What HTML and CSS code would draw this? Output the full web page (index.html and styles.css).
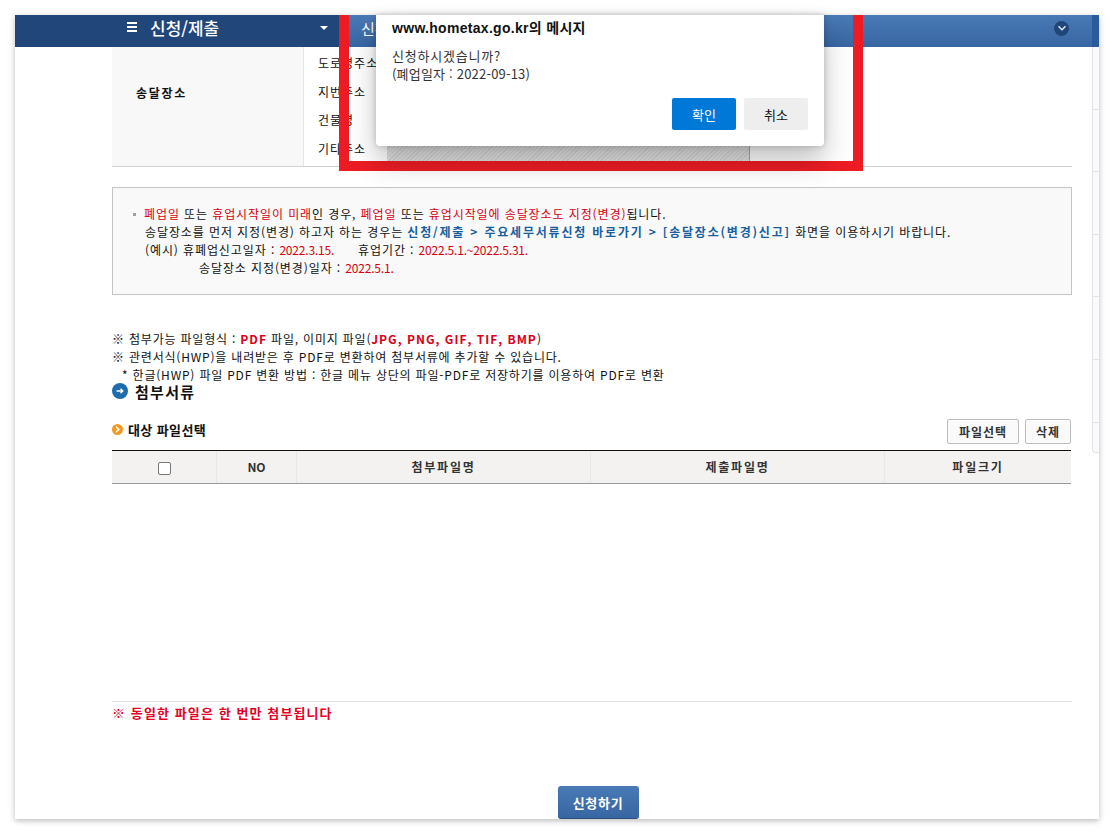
FILE: index.html
```html
<!DOCTYPE html>
<html lang="ko">
  <head>
    <meta charset="utf-8" />
    <title>신청/제출</title>
    <link rel="stylesheet" href="styles.css" />
  </head>
  <body>
    <div class="win">
      <div class="topbar">
        <div class="menuLeft">
          <div class="menuMain">
            <span class="burger"><i></i><i></i><i></i></span>
            <span class="menuTitle">신청/제출</span>
            <span class="caret"></span>
          </div>
        </div>
        <div class="menuRight">
          <span class="menuSub">신청</span>
          <span class="roundBtn">
            <svg width="10" height="10" viewBox="0 0 10 10"><path d="M1.5 3.2 5 6.8 8.5 3.2" fill="none" stroke="#dfe7f2" stroke-width="1.4" /></svg>
          </span>
        </div>
        <div class="menuEnd"></div>
      </div>

      <div class="side">
        <div class="sideCell"></div>
        <div class="sideCell"></div>
        <div class="sideCell"></div>
        <div class="sideCell"></div>
        <div class="sideCell"></div>
        <div class="sideCell"></div>
        <div class="sideCell sideLast"></div>
      </div>

      <div class="content">
        <div class="addrTable">
          <div class="addrHead">송달장소</div>
          <div class="addrLabels">
            <div>도로명주소</div>
            <div>지번주소</div>
            <div>건물명</div>
            <div>기타주소</div>
          </div>
          <div class="addrInputs">
            <div class="hatch"></div>
          </div>
        </div>

        <div class="notice">
          <p class="first"><span class="bullet"></span><em>폐업일</em> 또는 <em>휴업시작일이 미래</em>인 경우, <em>폐업일</em> 또는 <em>휴업시작일에 송달장소도 지정(변경)</em>됩니다.</p>
          <p>송달장소를 먼저 지정(변경) 하고자 하는 경우는 <b class="link">신청/제출 &gt; 주요세무서류신청 바로가기 &gt; [송달장소(변경)신고]</b> 화면을 이용하시기 바랍니다.</p>
          <p>(예시) 휴폐업신고일자 : <em class="date">2022.3.15.</em><span class="gap"></span>휴업기간 : <em class="date">2022.5.1.~2022.5.31.</em></p>
          <p class="indent">송달장소 지정(변경)일자 : <em class="date">2022.5.1.</em></p>
        </div>

        <div class="guide">
          <p>※ 첨부가능 파일형식 : <b class="red">PDF</b> 파일, 이미지 파일(<b class="red">JPG, PNG, GIF, TIF, BMP</b>)</p>
          <p>※ 관련서식(HWP)을 내려받은 후 PDF로 변환하여 첨부서류에 추가할 수 있습니다.</p>
          <p class="sub">* 한글(HWP) 파일 PDF 변환 방법 : 한글 메뉴 상단의 파일-PDF로 저장하기를 이용하여 PDF로 변환</p>
        </div>

        <h2 class="secTitle">
          <svg width="16" height="16" viewBox="0 0 16 16"><circle cx="8" cy="8" r="8" fill="#1f6cab" /><path d="M4.5 8h6M8.5 5.8 10.8 8 8.5 10.2" fill="none" stroke="#fff" stroke-width="1.4" /></svg>
          첨부서류
        </h2>

        <div class="fileBar">
          <h3 class="subTitle">
            <svg width="11" height="11" viewBox="0 0 11 11"><circle cx="5.5" cy="5.5" r="5.5" fill="#f29a1f" /><path d="M4 2.8 6.8 5.5 4 8.2" fill="none" stroke="#fff" stroke-width="1.5" /></svg>
            대상 파일선택
          </h3>
          <div class="fileBtns">
            <button class="btn btnFile">파일선택</button>
            <button class="btn btnDel">삭제</button>
          </div>
        </div>

        <div class="fileTable">
          <div class="fileHead">
            <div class="colCheck"><span class="checkbox"></span></div>
            <div class="colNo">NO</div>
            <div class="colName">첨부파일명</div>
            <div class="colName">제출파일명</div>
            <div class="colName">파일크기</div>
          </div>
          <div class="fileBody"></div>
        </div>

        <div class="onceNote">※ 동일한 파일은 한 번만 첨부됩니다</div>

        <div class="submitRow">
          <button class="submit">신청하기</button>
        </div>
      </div>
    </div>

    <div class="redBox"></div>

    <div class="dialog">
      <div class="dlgTitle">www.hometax.go.kr의 메시지</div>
      <div class="dlgText"><span class="dlgAsk">신청하시겠습니까?</span><br />(폐업일자 : 2022-09-13)</div>
      <div class="dlgBtns">
        <button class="dlgOk">확인</button>
        <button class="dlgCancel">취소</button>
      </div>
    </div>
  </body>
</html>
```

FILE: styles.css
```css
html,
body {
  margin: 0;
  height: 100%;
  background: #fff;
  overflow: hidden;
}

body {
  font-family: "Noto Sans CJK KR", "Liberation Sans", sans-serif;
  font-size: 12px;
  color: #111;
}

p {
  margin: 0;
}

button {
  font-family: inherit;
  cursor: pointer;
}

.win {
  position: relative;
  margin: 15px;
  height: 804px;
  background: #fff;
  box-shadow: 0 2px 5px rgba(0, 0, 0, 0.22), 0 0 12px rgba(0, 0, 0, 0.06);
}

.topbar {
  display: flex;
  height: 32px;
  background: #21477a;
}

.menuLeft {
  width: 324px;
  padding-left: 97px;
  box-sizing: border-box;
  background: #21477a;
}

.menuMain {
  display: flex;
  align-items: center;
  height: 100%;
  padding: 0 0 8px 15px;
  box-sizing: border-box;
  color: #fff;
}

.burger {
  display: flex;
  flex-direction: column;
  gap: 2px;
  width: 10px;
}
.burger i {
  height: 2px;
  background: #fff;
}

.menuTitle {
  margin-left: 13px;
  font-size: 17px;
  font-weight: 500;
}

.caret {
  margin: 2px 0 0 101px;
  border-left: 4px solid transparent;
  border-right: 4px solid transparent;
  border-top: 4px solid #fff;
}

.menuRight {
  flex: 1;
  display: flex;
  align-items: center;
  justify-content: space-between;
  padding: 0 23px 6px 22px;
  box-sizing: border-box;
  color: #fff;
  font-size: 15px;
  background: linear-gradient(#4a7ab5, #3766a3);
}

.roundBtn {
  display: flex;
  align-items: center;
  justify-content: center;
  width: 15px;
  height: 15px;
  border-radius: 50%;
  background: #21477a;
}

.menuEnd {
  width: 7px;
  background: #2a5c9c;
}

.side {
  position: absolute;
  top: 32px;
  right: 0;
  width: 7px;
}
.sideCell {
  height: 62.6px;
  box-sizing: border-box;
  border-left: 1px solid #e2e2e6;
  border-bottom: 1px solid #e2e2e6;
  background: #fafafd;
}
.sideLast {
  height: 30px;
  border-bottom-left-radius: 4px;
}

.content {
  padding: 0 27px 0 97px;
}

.addrTable {
  display: flex;
  height: 120px;
  border-bottom: 1px solid #d0d0d0;
  box-sizing: border-box;
}

.addrHead {
  display: flex;
  align-items: center;
  width: 192px;
  padding: 0 0 28px 24px;
  box-sizing: border-box;
  font-weight: 700;
  letter-spacing: 1.7px;
  background: #f8f8f8;
  border-right: 1px solid #e6e6e6;
}

.addrLabels {
  width: 83px;
  padding: 2px 0 0 14px;
  box-sizing: border-box;
  letter-spacing: 1px;
}
.addrLabels div {
  height: 28.7px;
  line-height: 28.7px;
}

.addrInputs {
  position: relative;
  width: 362px;
  border-right: 1px solid #a8a8a8;
}

.hatch {
  position: absolute;
  left: 0;
  right: 0;
  bottom: 0;
  height: 22px;
  background: repeating-linear-gradient(-45deg, #d6d6d6 0 1px, #e4e4e4 1px 3px);
}

.notice {
  height: 108px;
  margin-top: 20px;
  padding: 17px 0 0 32px;
  box-sizing: border-box;
  border: 1px solid #c4c4c4;
  background: #f9f9f9;
  line-height: 18px;
  letter-spacing: 0.9px;
}
.notice em {
  font-style: normal;
  color: #d6000f;
}
.notice .date {
  letter-spacing: -0.2px;
}
.notice .first {
  margin-left: -2px;
}
.notice .indent {
  margin-left: 54px;
}

.bullet {
  display: inline-block;
  width: 3px;
  height: 3px;
  margin: 0 8px 3px -10px;
  background: #a0a0a0;
}

.gap {
  display: inline-block;
  width: 24px;
}

.link {
  color: #17609f;
  letter-spacing: 1.8px;
}

.guide {
  margin-top: 35px;
  line-height: 18px;
  letter-spacing: 0.8px;
}
.red {
  color: #d9001b;
  letter-spacing: 1px;
}
.guide .sub {
  margin-left: 10px;
}

.secTitle {
  display: flex;
  align-items: center;
  gap: 7px;
  margin: -2px 0 0;
  height: 18px;
  font-size: 15px;
  font-weight: 700;
  letter-spacing: 1.3px;
}

.fileBar {
  display: flex;
  align-items: center;
  justify-content: space-between;
  height: 25px;
  margin-top: 19px;
  padding-right: 1px;
}

.subTitle {
  display: flex;
  align-items: center;
  gap: 5px;
  margin: 0;
  padding-bottom: 4px;
  font-size: 13px;
  font-weight: 700;
  letter-spacing: 0.4px;
}

.fileBtns {
  display: flex;
  gap: 6px;
}

.btn {
  height: 25px;
  padding: 0;
  border: 1px solid #bdbdbd;
  border-radius: 2px;
  background: #fafafa;
  color: #333;
  font-size: 12px;
  font-weight: 700;
  letter-spacing: 1px;
}
.btnFile {
  width: 72px;
}
.btnDel {
  width: 46px;
}

.fileTable {
  margin-top: 6px;
}

.fileHead {
  display: grid;
  grid-template-columns: 105px 80px 294px 294px 186px;
  height: 34px;
  margin-right: 1px;
  border-top: 1px solid #111;
  border-bottom: 1px solid #999;
  box-sizing: border-box;
  background: #f3f2f0;
  font-weight: 700;
  color: #333;
  text-align: center;
  line-height: 32px;
}
.fileHead > div {
  border-right: 1px solid #e8e8e8;
}
.fileHead > div:last-child {
  border-right: 0;
}
.colName {
  letter-spacing: 1.8px;
}

.checkbox {
  display: inline-block;
  width: 11px;
  height: 11px;
  vertical-align: middle;
  border: 1px solid #777;
  border-radius: 2px;
  background: #fff;
}

.fileBody {
  height: 217px;
  border-bottom: 1px solid #dfdfdf;
}

.onceNote {
  margin-top: 2px;
  font-size: 13px;
  line-height: 18px;
  font-weight: 700;
  letter-spacing: 1.1px;
  color: #e60026;
}

.submitRow {
  display: flex;
  justify-content: center;
  margin-top: 64px;
  padding-left: 12px;
}

.submit {
  width: 81px;
  height: 33px;
  border: 0;
  border-bottom: 1px solid #2a4f80;
  border-radius: 3px;
  background: linear-gradient(#4a7ab5, #3766a3);
  color: #fff;
  font-size: 13px;
  font-weight: 700;
  letter-spacing: 0.7px;
}

.redBox {
  position: absolute;
  left: 339px;
  top: 15px;
  width: 524px;
  height: 156px;
  box-sizing: border-box;
  border: 10px solid #ed1c24;
  border-top: 0;
}

.dialog {
  position: absolute;
  left: 376px;
  top: 15px;
  width: 448px;
  height: 131px;
  box-sizing: border-box;
  padding: 4px 16px 0;
  background: #fff;
  border-radius: 0 0 4px 4px;
  box-shadow: 0 16px 28px rgba(0, 0, 0, 0.24), 0 0 6px rgba(0, 0, 0, 0.2);
}

.dlgTitle {
  font-family: "Liberation Sans", "Noto Sans CJK KR", sans-serif;
  font-size: 14px;
  font-weight: 700;
  line-height: 18px;
  letter-spacing: 0.3px;
  color: #111;
}

.dlgText {
  margin-top: 10px;
  font-size: 13px;
  line-height: 18px;
  letter-spacing: 0.2px;
  color: #333;
}
.dlgAsk {
  letter-spacing: 0.8px;
}

.dlgBtns {
  display: flex;
  justify-content: flex-end;
  gap: 8px;
  margin-top: 15px;
}

.dlgOk,
.dlgCancel {
  width: 64px;
  height: 32px;
  border: 0;
  border-radius: 2px;
  font-size: 13px;
}
.dlgOk {
  background: #0078d7;
  color: #fff;
}
.dlgCancel {
  background: #eeeeee;
  color: #111;
}
```
